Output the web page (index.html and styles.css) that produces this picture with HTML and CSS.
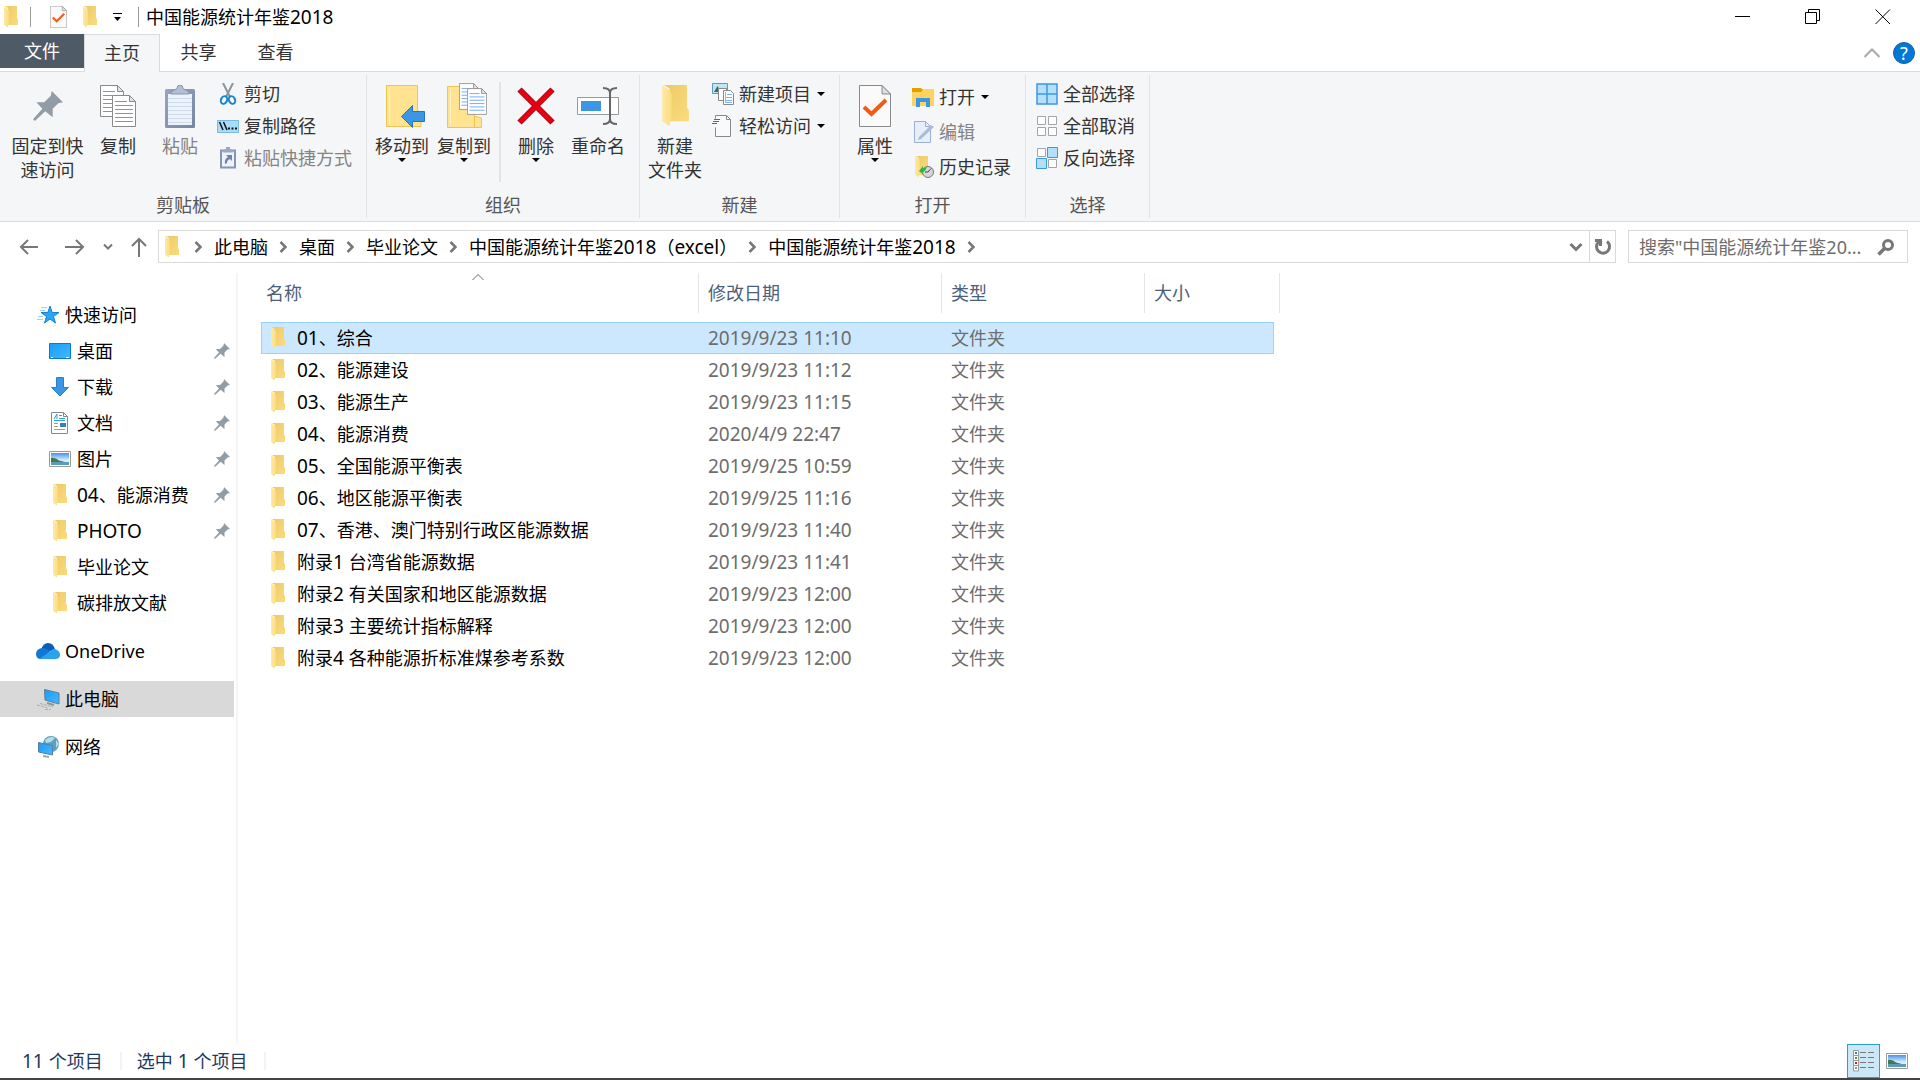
FILE: index.html
```html
<!DOCTYPE html>
<html lang="zh-CN">
<head>
    <meta charset="UTF-8">
    <meta name="viewport" content="width=device-width, initial-scale=1.0">
    <title>中国能源统计年鉴2018</title>
    <link rel="stylesheet" href="styles.css">
</head>
<body>
    <!-- shared icons -->
    <svg class="sprite" aria-hidden="true">
        <defs>
            <linearGradient id="gBack" x1="0" y1="0" x2="1" y2="1">
                <stop offset="0" stop-color="#ecc968"/><stop offset="1" stop-color="#fbdc7d"/>
            </linearGradient>
            <linearGradient id="gFront" x1="0" y1="0" x2="1" y2="0">
                <stop offset="0" stop-color="#ffe9a6"/><stop offset="1" stop-color="#fbdc80"/>
            </linearGradient>
            <linearGradient id="gBlue" x1="0" y1="0" x2="1" y2="1">
                <stop offset="0" stop-color="#1a9bf8"/><stop offset="1" stop-color="#43b8ff"/>
            </linearGradient>
            <linearGradient id="gSky" x1="0" y1="0" x2="0" y2="1">
                <stop offset="0" stop-color="#4a90e8"/><stop offset=".6" stop-color="#d5efff"/>
            </linearGradient>
            <linearGradient id="gClip" x1="0" y1="0" x2="1" y2="1">
                <stop offset="0" stop-color="#96a5c4"/><stop offset="1" stop-color="#75879f"/>
            </linearGradient>
        </defs>
        <symbol id="folder" viewBox="0 0 14 22">
            <path d="M1 0H13V12L14 13V19H4V2Z" fill="url(#gBack)"/>
            <path d="M0 0L4 3Q5 4 5 5V16Q5 18 4 19V21.500L0 19Z" fill="url(#gFront)"/>
        </symbol>
        <symbol id="pin" viewBox="0 0 16 16">
            <path d="M10 0L16 6L13.500 6.500L10.500 9.500L10.500 14L6.500 10.800L1 16L0 15L5 9.500L1.800 6L6 6L9.500 2.500Z" fill="#929ca5"/>
        </symbol>
        <symbol id="page" viewBox="0 0 24 32">
            <path d="M.5 .5H17.500L23.500 6.500V31.500H.5Z" fill="#fff" stroke="#8a8a8a"/>
            <path d="M17.500 .5V6.500H23.500Z" fill="#e4e4e4" stroke="#8a8a8a"/>
            <path d="M3 6.500H15M3 10.500H21M3 14.500H21M3 18.500H21M3 22.500H21M3 26.500H21" stroke="#5b9bf5"/>
        </symbol>
        <symbol id="check" viewBox="0 0 32 42">
            <path d="M.5 .5H23L31.500 9V41.500H.5Z" fill="#fafafa" stroke="#8a8a8a"/>
            <path d="M23 .5V9H31.500Z" fill="#ddd" stroke="#8a8a8a"/>
            <path d="M5 22L12.500 29L27 15" fill="none" stroke="#f25c12" stroke-width="4"/>
        </symbol>
        <symbol id="crumb" viewBox="0 0 8 12">
            <path d="M1.500 1L6.500 6L1.500 11" fill="none" stroke="#777" stroke-width="2.500"/>
        </symbol>
        <symbol id="caret" viewBox="0 0 8 4">
            <path d="M0 0H8L4 4Z" fill="#000"/>
        </symbol>
        <symbol id="picture" viewBox="0 0 22 16">
            <path d="M.5 .5H21.500V15.500H.5Z" fill="#fff" stroke="#999"/>
            <path d="M2 2H20V14H2Z" fill="url(#gSky)"/>
            <path d="M2 7Q6 6 10 9.500L16 11H2Z" fill="#417a52"/>
            <path d="M2 11H20V14H2Z" fill="#5a9db5"/>
        </symbol>
    </svg>

    <header class="title-bar">
        <svg class="folder-icon"><use href="#folder"/></svg>
        <span class="title-sep"></span>
        <button class="quick-btn" aria-label="属性"><svg width="17" height="22"><use href="#check"/></svg></button>
        <button class="quick-btn" aria-label="新建文件夹"><svg class="folder-icon"><use href="#folder"/></svg></button>
        <button class="quick-btn" aria-label="自定义快速访问工具栏">
            <svg width="9" height="9" viewBox="0 0 9 9"><path d="M0 .5H9" stroke="#000"/><path d="M1 4H8L4.500 8Z"/></svg>
        </button>
        <span class="title-sep"></span>
        <h1 class="title">中国能源统计年鉴<span class="en">2018</span></h1>
        <div class="window-controls">
            <button aria-label="最小化"><svg width="16" height="16"><path d="M0 7.500H15" stroke="#000"/></svg></button>
            <button aria-label="还原"><svg width="16" height="16" fill="none" stroke="#000"><path d="M.5 3.500H11.500V14.500H.5ZM3.500 3.500V.5H14.500V11.500H11.500"/></svg></button>
            <button aria-label="关闭"><svg width="16" height="16" stroke="#000"><path d="M.5 .5L15 15M15 .5L.5 15"/></svg></button>
        </div>
    </header>

    <nav class="tabs">
        <button class="tab tab-file">文件</button>
        <button class="tab tab-active">主页</button>
        <button class="tab">共享</button>
        <button class="tab">查看</button>
        <div class="tab-tools">
            <button aria-label="折叠功能区"><svg width="16" height="10" fill="none" stroke="#aaa" stroke-width="2"><path d="M.5 9L8 1.500L15.500 9"/></svg></button>
            <button class="help" aria-label="帮助">?</button>
        </div>
    </nav>

    <section class="ribbon">
        <div class="group group-clipboard">
            <div class="group-body">
                <button class="big-btn big-btn-wide">
                    <span class="big-icon"><svg width="30" height="30"><use href="#pin"/></svg></span>
                    <span>固定到快<br>速访问</span>
                </button>
                <button class="big-btn">
                    <span class="big-icon">
                        <svg width="36" height="42"><use href="#page" width="24" height="32"/><use href="#page" x="12" y="10" width="24" height="32"/></svg>
                    </span>
                    <span>复制</span>
                </button>
                <button class="big-btn" disabled>
                    <span class="big-icon">
                        <svg width="30" height="43" viewBox="0 0 30 43">
                            <rect y="4" width="30" height="39" rx="1.500" fill="url(#gClip)"/>
                            <path d="M3 9H27V40H3Z" fill="#eef3fb"/>
                            <path d="M3 13.500H27M3 17.500H27M3 21.500H27M3 25.500H27M3 29.500H27M3 33.500H27M3 37.500H27" stroke="#cfdaea"/>
                            <path d="M6 9V7L12 3.500Q12 0 15 0Q18 0 18 3.500L24 7V9Z" fill="#b3bfd5" stroke="#8495b5"/>
                        </svg>
                    </span>
                    <span>粘贴</span>
                </button>
                <div class="small-list">
                    <button class="small-btn">
                        <svg width="22" height="22" viewBox="0 0 22 22" fill="none">
                            <path d="M6 0L13 14M16 0L9 14" stroke="#8b959e" stroke-width="2"/>
                            <ellipse cx="7" cy="17" rx="3" ry="4" stroke="#1684cf" stroke-width="2" transform="rotate(25 7 17)"/>
                            <ellipse cx="15" cy="17" rx="3" ry="4" stroke="#1684cf" stroke-width="2" transform="rotate(-25 15 17)"/>
                        </svg>
                        剪切
                    </button>
                    <button class="small-btn">
                        <svg width="22" height="22" viewBox="0 0 22 22">
                            <path d="M.5 5.500H21.500V17.500H.5Z" fill="#a9dbfb" stroke="#7ab8e0"/>
                            <path d="M2.500 7L6 15M6.500 7L10 15" stroke="#111" stroke-width="1.500"/>
                            <path d="M11 13.500h2M14.500 13.500h2M18 13.500h2" stroke="#111" stroke-width="2"/>
                        </svg>
                        复制路径
                    </button>
                    <button class="small-btn" disabled>
                        <svg width="22" height="22" viewBox="0 0 22 22">
                            <path d="M4 3.500H18V20.500H4Z" fill="#eef3fb" stroke="#8495b8" stroke-width="2"/>
                            <path d="M6 5.500V3L9 2V0H13V2L16 3V5.500Z" fill="#9aa8c6"/>
                            <path d="M9 8H15V14L13 12Q10 13 10 16L8 17Q7 12 11 10Z" fill="#7083a8"/>
                        </svg>
                        粘贴快捷方式
                    </button>
                </div>
            </div>
            <div class="group-name">剪贴板</div>
        </div>

        <div class="group group-organize">
            <div class="group-body">
                <button class="big-btn">
                    <span class="big-icon">
                        <svg width="48" height="44" viewBox="-8 0 48 44">
                            <path d="M.5 1.500H31.500V26L35 30V42.500H.5Z" fill="#ffe390" stroke="#ecc654"/>
                            <path d="M3.500 4V40" stroke="#fff2c4"/>
                            <path d="M15.500 32.500L26.500 21.500V27.500H38.500V37.500H26.500V43.500Z" fill="#3b97e6" stroke="#2576be"/>
                        </svg>
                    </span>
                    <span>移动到</span>
                    <svg class="caret"><use href="#caret"/></svg>
                </button>
                <button class="big-btn">
                    <span class="big-icon">
                        <svg width="50" height="46" viewBox="-8 0 50 46">
                            <path d="M.5 3.500H27.500V33L34.500 35V44.500H.5Z" fill="#ffe390" stroke="#ecc654"/>
                            <path d="M27.500 33V44.500" stroke="#ecc654"/>
                            <path d="M3.500 6V42" stroke="#fff2c4"/>
                            <use href="#page" x="12" width="20" height="27"/>
                            <use href="#page" x="20" y="5" width="20" height="27"/>
                        </svg>
                    </span>
                    <span>复制到</span>
                    <svg class="caret"><use href="#caret"/></svg>
                </button>
                <span class="body-sep"></span>
                <button class="big-btn">
                    <span class="big-icon">
                        <svg width="38" height="38" viewBox="0 0 38 38"><path d="M2.500 2.500L35.500 35.500M35.500 2.500L2.500 35.500" stroke="#a3000c" stroke-width="6"/><path d="M3 3L35 35M35 3L3 35" stroke="#e60012" stroke-width="4.500"/></svg>
                    </span>
                    <span>删除</span>
                    <svg class="caret"><use href="#caret"/></svg>
                </button>
                <button class="big-btn">
                    <span class="big-icon">
                        <svg width="42" height="38" viewBox="0 0 42 38">
                            <path d="M.5 10.500H41.500V27.500H.5Z" fill="#fff" stroke="#999"/>
                            <path d="M4 14H24V24H4Z" fill="#3b97e6"/>
                            <path d="M26 1Q33 1 33 6V32Q33 37 26 37M40 1Q33 1 33 6M40 37Q33 37 33 32" fill="none" stroke="#666" stroke-width="2"/>
                        </svg>
                    </span>
                    <span>重命名</span>
                </button>
            </div>
            <div class="group-name">组织</div>
        </div>

        <div class="group group-new">
            <div class="group-body">
                <button class="big-btn">
                    <span class="big-icon"><svg width="27" height="42"><use href="#folder"/></svg></span>
                    <span>新建<br>文件夹</span>
                </button>
                <div class="small-list">
                    <button class="small-btn">
                        <svg width="22" height="22" viewBox="0 0 22 22">
                            <path d="M.5 .5H15.500V10.500H.5Z" fill="#bfe5f7" stroke="#5a9cc0"/>
                            <path d="M2 9L5.500 3L9 9Z" fill="#3d6b55"/>
                            <path d="M6.500 5.500H14.500V17.500H6.500Z" fill="#fff" stroke="#888"/>
                            <path d="M11.500 7.500H18.500L21.500 10.500V21.500H11.500Z" fill="#fff" stroke="#888"/>
                            <path d="M15 11.500H20M13 14.500H20M13 17.500H20M13 19.500H20" stroke="#7fb2f5"/>
                            <path d="M13.500 9V20" stroke="#ef9a9a"/>
                        </svg>
                        新建项目
                        <svg class="caret"><use href="#caret"/></svg>
                    </button>
                    <button class="small-btn">
                        <svg width="22" height="22" viewBox="0 0 22 22">
                            <path d="M3.500 .5H14.500L18.500 4.500V21.500H3.500Z" fill="#fafafa" stroke="#8a8a8a"/>
                            <path d="M14.500 .5V4.500H18.500" fill="none" stroke="#8a8a8a"/>
                            <path d="M2 5H8M1 8H7M0 11H5" stroke="#f5f6f7" stroke-width="3"/>
                            <path d="M2 4.500H8M1 6.500H7M0 8.500H5" stroke="#1979ca" stroke-width="1.200"/>
                        </svg>
                        轻松访问
                        <svg class="caret"><use href="#caret"/></svg>
                    </button>
                </div>
            </div>
            <div class="group-name">新建</div>
        </div>

        <div class="group group-open">
            <div class="group-body">
                <button class="big-btn">
                    <span class="big-icon"><svg width="32" height="42"><use href="#check"/></svg></span>
                    <span>属性</span>
                    <svg class="caret"><use href="#caret"/></svg>
                </button>
                <div class="small-list small-list-loose">
                    <button class="small-btn">
                        <svg width="22" height="22" viewBox="0 0 22 22">
                            <path d="M0 3H22V20H0Z" fill="#ffd35c"/>
                            <path d="M0 2H9L11 4L9 6H0Z" fill="#e0a100"/>
                            <path d="M4 12H18V21H14V16H8V21H4Z" fill="#3b97e6"/>
                        </svg>
                        打开
                        <svg class="caret"><use href="#caret"/></svg>
                    </button>
                    <button class="small-btn" disabled>
                        <svg width="22" height="22" viewBox="0 0 22 22">
                            <path d="M2.500 .5H13.500L18.500 5.500V21.500H2.500Z" fill="#e6eefa" stroke="#9daed0"/>
                            <path d="M13.500 .5V5.500H18.500" fill="none" stroke="#9daed0"/>
                            <path d="M6 19L7 16L19 4L22 6L9 18Z" fill="#a9bbd8"/>
                        </svg>
                        编辑
                    </button>
                    <button class="small-btn">
                        <svg width="22" height="22" viewBox="0 0 22 22">
                            <use href="#folder" x="3" width="14" height="22"/>
                            <circle cx="16" cy="16" r="5.500" fill="#d5d8da" stroke="#777"/>
                            <path d="M16 16L19 12.500M16 16H13" stroke="#444"/>
                            <path d="M7 15L11 10V12Q14 12 15 10Q14 15 11 16V18Z" fill="#2fb344"/>
                        </svg>
                        历史记录
                    </button>
                </div>
            </div>
            <div class="group-name">打开</div>
        </div>

        <div class="group group-select">
            <div class="group-body">
                <div class="small-list">
                    <button class="small-btn">
                        <svg width="22" height="22" viewBox="0 0 22 22"><path d="M1 1H11V11H1ZM11 1H21V11H11ZM1 11H11V21H1ZM11 11H21V21H11Z" fill="#b5e0fb" stroke="#3b97e6" stroke-width="1.500"/></svg>
                        全部选择
                    </button>
                    <button class="small-btn">
                        <svg width="22" height="22" viewBox="0 0 22 22"><path d="M1.500 1.500H9.500V9.500H1.500ZM12.500 1.500H20.500V9.500H12.500ZM1.500 12.500H9.500V20.500H1.500ZM12.500 12.500H20.500V20.500H12.500Z" fill="#fff" stroke="#a5a5a5"/></svg>
                        全部取消
                    </button>
                    <button class="small-btn">
                        <svg width="22" height="22" viewBox="0 0 22 22"><path d="M1.500 1.500H9.500V9.500H1.500ZM12.500 12.500H20.500V20.500H12.500Z" fill="#fff" stroke="#a5a5a5"/><path d="M11.500 .5H21.500V10.500H11.500ZM.5 11.500H10.500V21.500H.5Z" fill="#b5e0fb" stroke="#3b97e6"/></svg>
                        反向选择
                    </button>
                </div>
            </div>
            <div class="group-name">选择</div>
        </div>
    </section>

    <div class="nav-bar">
        <div class="nav-buttons">
            <button aria-label="后退"><svg width="20" height="16" class="arrow"><path d="M19 8H2M9 1L2 8L9 15"/></svg></button>
            <button aria-label="前进"><svg width="20" height="16" class="arrow"><path d="M0 8H18M11 1L18 8L11 15"/></svg></button>
            <button aria-label="最近浏览的位置"><svg width="10" height="8" class="arrow"><path d="M1 1.500L5 5.500L9 1.500"/></svg></button>
            <button aria-label="上移"><svg width="16" height="20" class="arrow"><path d="M8 20V2M1 9L8 2L15 9"/></svg></button>
        </div>
        <div class="address">
            <svg class="folder-icon"><use href="#folder"/></svg>
            <svg class="crumb"><use href="#crumb"/></svg>
            <button>此电脑</button>
            <svg class="crumb"><use href="#crumb"/></svg>
            <button>桌面</button>
            <svg class="crumb"><use href="#crumb"/></svg>
            <button>毕业论文</button>
            <svg class="crumb"><use href="#crumb"/></svg>
            <button>中国能源统计年鉴<span class="en">2018</span>（<span class="en">excel</span>）</button>
            <svg class="crumb"><use href="#crumb"/></svg>
            <button>中国能源统计年鉴<span class="en">2018</span></button>
            <svg class="crumb"><use href="#crumb"/></svg>
            <div class="address-tools">
                <button aria-label="以前的位置"><svg width="14" height="10" fill="none" stroke="#777" stroke-width="3"><path d="M1.500 2L7 7.500L12.500 2"/></svg></button>
                <button class="refresh" aria-label="刷新"><svg width="18" height="18" fill="none" stroke="#777" stroke-width="3"><path d="M4.500 4A6.500 6.500 0 1 0 13 3.500M1 2.500H6.500V8"/></svg></button>
            </div>
        </div>
        <div class="search">
            <input type="text" aria-label="搜索" placeholder="搜索&quot;中国能源统计年鉴20...">
            <button aria-label="开始搜索"><svg width="18" height="18" fill="none" stroke="#777"><circle cx="11" cy="7" r="4.500" stroke-width="3"/><path d="M8 10L1.500 16.500" stroke-width="3.500"/></svg></button>
        </div>
    </div>

    <main class="content">
        <aside class="sidebar">
            <ul class="tree">
                <li><a href="#" class="tree-item tree-root">
                    <svg width="24" height="22" viewBox="0 0 24 22"><path d="M14 2L16.200 8.500H23L17.500 12.500L19.500 19L14 15L8.500 19L10.500 12.500L5 8.500H11.800Z" fill="#2aa5f7" stroke="#1583cf"/><path d="M5 3.500H11M4 6.500H9M2 12.500H7M1 15.500H7" stroke="#9ad4fa"/></svg>
                    快速访问</a></li>
                <li><a href="#" class="tree-item">
                    <svg width="22" height="22" viewBox="0 0 22 22"><path d="M.5 3.500H21.500V18.500H.5Z" fill="url(#gBlue)" stroke="#0d77cd"/><path d="M2 17.500H4M17 17.500H20" stroke="#fff"/></svg>
                    桌面<svg class="pinned"><use href="#pin"/></svg></a></li>
                <li><a href="#" class="tree-item">
                    <svg width="22" height="22" viewBox="0 0 22 22"><path d="M7.500 1.500H14.500V11.500H19.500L11 20L2.500 11.500H7.500Z" fill="#3b97e6" stroke="#2b80ca"/></svg>
                    下载<svg class="pinned"><use href="#pin"/></svg></a></li>
                <li><a href="#" class="tree-item">
                    <svg width="22" height="22" viewBox="0 0 22 22"><path d="M2.500 .5H14.500L18.500 4.500V21.500H2.500Z" fill="#fff" stroke="#888"/><path d="M14.500 .5V4.500H18.500" fill="none" stroke="#888"/><path d="M5 7L8 2V7M10 3.500H13M10 6.500H16M5 8.500H16" stroke="#2e9be6" fill="none"/><path d="M5 11.500H9M5 14.500H9M5 17.500H16" stroke="#999"/><path d="M11 11H17V15H11Z" fill="#3a82ad"/></svg>
                    文档<svg class="pinned"><use href="#pin"/></svg></a></li>
                <li><a href="#" class="tree-item">
                    <svg width="22" height="16"><use href="#picture"/></svg>
                    图片<svg class="pinned"><use href="#pin"/></svg></a></li>
                <li><a href="#" class="tree-item">
                    <svg width="22" height="22"><use href="#folder"/></svg>
                    <span><span class="en">04</span>、能源消费</span><svg class="pinned"><use href="#pin"/></svg></a></li>
                <li><a href="#" class="tree-item">
                    <svg width="22" height="22"><use href="#folder"/></svg>
                    <span class="en">PHOTO</span><svg class="pinned"><use href="#pin"/></svg></a></li>
                <li><a href="#" class="tree-item">
                    <svg width="22" height="22"><use href="#folder"/></svg>
                    毕业论文</a></li>
                <li><a href="#" class="tree-item">
                    <svg width="22" height="22"><use href="#folder"/></svg>
                    碳排放文献</a></li>
            </ul>
            <ul class="tree">
                <li><a href="#" class="tree-item tree-root">
                    <svg width="24" height="16" viewBox="0 0 24 16"><path d="M5 7Q7 0 12 0Q17 0 19 6L12 9Z" fill="#0a5db8"/><path d="M5 16Q0 16 0 11Q0 6 6 5Q11 5 14 9L9 16Z" fill="#1179d4"/><path d="M4 15.500L16 7Q18 5 20 6.500Q24 8 24 11.500Q24 16 19 16H5Z" fill="#2aa3ec"/></svg>
                    OneDrive</a></li>
            </ul>
            <ul class="tree">
                <li><a href="#" class="tree-item tree-root tree-current">
                    <svg width="24" height="22" viewBox="0 0 24 22"><path d="M8.500 1.500L23 5V16L9 12Z" fill="url(#gBlue)" stroke="#5f7f96"/><path d="M11 15L18 17" stroke="#899" stroke-width="2"/><path d="M1 17L12 20M4 15.500L17 19M9 21.500H15" stroke="#a7adb2" stroke-dasharray="3 1"/></svg>
                    此电脑</a></li>
            </ul>
            <ul class="tree">
                <li><a href="#" class="tree-item tree-root">
                    <svg width="24" height="22" viewBox="0 0 24 22"><circle cx="15" cy="8" r="8" fill="#5d9fc0"/><path d="M9 4Q14 -1 19 2L15 6L10 7ZM20 4L23 8L20 12Z" fill="#b9dbe6"/><path d="M2.500 6.500L16.500 9.500V19L2.500 16Z" fill="url(#gBlue)" stroke="#56819c"/><path d="M7 20L13 21" stroke="#9aa" stroke-width="2"/></svg>
                    网络</a></li>
            </ul>
        </aside>

        <div class="file-pane">
            <table class="files">
                <colgroup><col class="col-name"><col class="col-date"><col class="col-type"><col class="col-size"><col class="col-edge"></colgroup>
                <thead>
                    <tr>
                        <th>名称<svg class="sort" width="12" height="7" fill="none" stroke="#666"><path d="M.5 6L6 .5L11.500 6"/></svg></th>
                        <th>修改日期</th>
                        <th>类型</th>
                        <th>大小</th>
                        <th class="edge"></th>
                    </tr>
                </thead>
                <tbody>
                    <tr class="selected"><td><div class="file"><svg class="folder-icon"><use href="#folder"/></svg><span><span class="en">01</span>、综合</span></div></td><td class="en">2019/9/23 11:10</td><td>文件夹</td><td></td></tr>
                    <tr><td><div class="file"><svg class="folder-icon"><use href="#folder"/></svg><span><span class="en">02</span>、能源建设</span></div></td><td class="en">2019/9/23 11:12</td><td>文件夹</td><td></td></tr>
                    <tr><td><div class="file"><svg class="folder-icon"><use href="#folder"/></svg><span><span class="en">03</span>、能源生产</span></div></td><td class="en">2019/9/23 11:15</td><td>文件夹</td><td></td></tr>
                    <tr><td><div class="file"><svg class="folder-icon"><use href="#folder"/></svg><span><span class="en">04</span>、能源消费</span></div></td><td class="en">2020/4/9 22:47</td><td>文件夹</td><td></td></tr>
                    <tr><td><div class="file"><svg class="folder-icon"><use href="#folder"/></svg><span><span class="en">05</span>、全国能源平衡表</span></div></td><td class="en">2019/9/25 10:59</td><td>文件夹</td><td></td></tr>
                    <tr><td><div class="file"><svg class="folder-icon"><use href="#folder"/></svg><span><span class="en">06</span>、地区能源平衡表</span></div></td><td class="en">2019/9/25 11:16</td><td>文件夹</td><td></td></tr>
                    <tr><td><div class="file"><svg class="folder-icon"><use href="#folder"/></svg><span><span class="en">07</span>、香港、澳门特别行政区能源数据</span></div></td><td class="en">2019/9/23 11:40</td><td>文件夹</td><td></td></tr>
                    <tr><td><div class="file"><svg class="folder-icon"><use href="#folder"/></svg><span>附录<span class="en">1 </span>台湾省能源数据</span></div></td><td class="en">2019/9/23 11:41</td><td>文件夹</td><td></td></tr>
                    <tr><td><div class="file"><svg class="folder-icon"><use href="#folder"/></svg><span>附录<span class="en">2 </span>有关国家和地区能源数据</span></div></td><td class="en">2019/9/23 12:00</td><td>文件夹</td><td></td></tr>
                    <tr><td><div class="file"><svg class="folder-icon"><use href="#folder"/></svg><span>附录<span class="en">3 </span>主要统计指标解释</span></div></td><td class="en">2019/9/23 12:00</td><td>文件夹</td><td></td></tr>
                    <tr><td><div class="file"><svg class="folder-icon"><use href="#folder"/></svg><span>附录<span class="en">4 </span>各种能源折标准煤参考系数</span></div></td><td class="en">2019/9/23 12:00</td><td>文件夹</td><td></td></tr>
                </tbody>
            </table>
        </div>
    </main>

    <footer class="status-bar">
        <span class="status-item"><span class="en">11 </span>个项目</span>
        <span class="status-item">选中<span class="en"> 1 </span>个项目</span>
        <div class="view-buttons">
            <button class="view-active" aria-label="详细信息">
                <svg width="22" height="22" viewBox="0 0 22 22"><path d="M.5 .5H5.500V21H.5ZM.5 5.500H5.500M.5 10.500H5.500M.5 15.500H5.500" fill="#fff" stroke="#999"/><path d="M2 3H4" stroke="#2b7bc4" stroke-width="2"/><path d="M2 8H4" stroke="#6a8a2b" stroke-width="2"/><path d="M2 13H4" stroke="#b22" stroke-width="2"/><path d="M2 18H4" stroke="#7a9a8a" stroke-width="2"/><path d="M7 2.500H13M15 2.500H21M7 7.500H13M15 7.500H21M7 12.500H13M15 12.500H21M7 17.500H13M15 17.500H21" stroke="#777"/></svg>
            </button>
            <button aria-label="大缩略图"><svg width="22" height="16"><use href="#picture"/></svg></button>
        </div>
    </footer>
    <div class="taskbar-edge"></div>
</body>
</html>
```
FILE: styles.css
```css
* {
    box-sizing: border-box;
}

body {
    font-family: "Noto Sans", "Noto Sans CJK SC", sans-serif;
    font-size: 18px;
    line-height: 24px;
    margin: 0;
    height: 100vh;
    display: flex;
    flex-direction: column;
    background: #fff;
    color: #000;
    overflow: hidden;
}

button {
    font: inherit;
    color: inherit;
    background: none;
    border: none;
    padding: 0;
    white-space: nowrap;
}

svg {
    flex: none;
    display: block;
}

.sprite {
    position: absolute;
    width: 0;
    height: 0;
}

.en {
    font-size: 19px;
}

.folder-icon {
    width: 14px;
    height: 22px;
}

.caret {
    width: 8px;
    height: 4px;
}

/* title bar */
.title-bar {
    display: flex;
    align-items: center;
    height: 34px;
    padding-left: 4px;
}

.title-sep {
    width: 1px;
    height: 20px;
    margin: 0 7px 0 12px;
    background: #999;
}

.quick-btn {
    margin-left: 12px;
}

.quick-btn + .quick-btn {
    margin-left: 16px;
}

.quick-btn + .title-sep {
    margin-left: 16px;
}

.title {
    margin: 0;
    font-size: 18px;
    font-weight: 400;
}

.window-controls {
    display: flex;
    margin-left: auto;
    padding-right: 2px;
}

.window-controls button {
    width: 70px;
    height: 34px;
    display: flex;
    align-items: center;
    justify-content: center;
}

/* tabs */
.tabs {
    display: flex;
    height: 38px;
    border-bottom: 1px solid #dadbdc;
}

.tab {
    width: 77px;
    height: 36px;
    color: #333;
}

.tab-file {
    width: 84px;
    height: 34px;
    background: #4f5a67;
    color: #fff;
}

.tab-active {
    width: 76px;
    height: 38px;
    padding-bottom: 2px;
    background: #f5f6f7;
    border: 1px solid #dadbdc;
    border-bottom: none;
}

.tab-tools {
    display: flex;
    align-items: center;
    gap: 13px;
    margin-left: auto;
    padding-right: 5px;
}

.help {
    width: 22px;
    height: 22px;
    border-radius: 50%;
    background: #0078d7;
    border: 1px solid #0b5ea8;
    color: #fff;
    line-height: 20px;
}

/* ribbon */
.ribbon {
    display: flex;
    height: 150px;
    padding: 3px 0;
    background: #f5f6f7;
    border-bottom: 1px solid #dadbdc;
    color: #333;
}

.group {
    display: flex;
    flex-direction: column;
    border-right: 1px solid #e2e3e4;
    padding-top: 3px;
}

.group-body {
    display: flex;
    flex: 1;
    align-items: flex-start;
    padding: 0 14px 0 4px;
}

.group-clipboard .group-body {
    padding: 0 14px 0 8px;
}

.group-organize .group-body {
    padding-right: 10px;
}

.group-name {
    height: 25px;
    text-align: center;
    color: #555;
}

.big-btn {
    width: 62px;
    display: flex;
    flex-direction: column;
    align-items: center;
}

.big-btn-wide {
    width: 79px;
}

.big-icon {
    height: 56px;
    display: flex;
    align-items: center;
    justify-content: center;
}

button:disabled {
    color: #848484;
}

.body-sep {
    width: 2px;
    height: 100px;
    margin: 4px 4px 0;
    background: #e2e3e4;
}

.small-list {
    display: flex;
    flex-direction: column;
    padding-left: 6px;
}

.small-btn {
    height: 32px;
    display: flex;
    align-items: center;
    gap: 5px;
}

.small-btn .caret {
    margin-left: 1px;
}

.small-list-loose {
    padding-top: 1px;
}

.small-list-loose .small-btn {
    height: 35px;
}

/* navigation */
.nav-bar {
    display: flex;
    padding: 8px 12px 10px 19px;
}

.nav-buttons {
    display: flex;
    align-items: center;
    width: 139px;
    gap: 18px;
}

.nav-buttons button:first-child {
    margin-right: 8px;
}

.arrow {
    fill: none;
    stroke: #777;
    stroke-width: 2px;
}

.address {
    flex: 1;
    display: flex;
    align-items: center;
    height: 33px;
    border: 1px solid #d9d9d9;
    padding-left: 6px;
}

.crumb {
    width: 8px;
    height: 12px;
    margin: 0 12px 0 11px;
}

.address .folder-icon + .crumb {
    margin-left: 15px;
}

.address-tools {
    display: flex;
    align-self: stretch;
    margin-left: auto;
}

.address-tools button {
    width: 26px;
    display: flex;
    align-items: center;
    justify-content: center;
}

.address-tools .refresh {
    border-left: 1px solid #d9d9d9;
}

.search {
    display: flex;
    align-items: center;
    width: 280px;
    margin-left: 12px;
    padding: 0 12px 0 10px;
    border: 1px solid #d9d9d9;
}

.search input {
    flex: 1;
    min-width: 0;
    border: none;
    outline: none;
    padding: 0;
    font: inherit;
    background: none;
}

.search input::placeholder {
    color: #6d6d6d;
}

/* content */
.content {
    flex: 1;
    display: flex;
    min-height: 0;
}

.sidebar {
    width: 238px;
    padding: 24px 2px 0 0;
    border-right: 2px solid #f5f5f5;
}

.tree {
    list-style: none;
    margin: 0 0 12px;
    padding: 0;
}

.tree-item {
    display: flex;
    align-items: center;
    gap: 6px;
    height: 36px;
    padding: 0 4px 0 49px;
    color: #000;
    text-decoration: none;
}

.tree-root {
    gap: 5px;
    padding-left: 36px;
}

.tree-current {
    background: #d9d9d9;
}

.pinned {
    width: 16px;
    height: 16px;
    margin-left: auto;
}

.file-pane {
    flex: 1;
    padding-left: 23px;
}

.files {
    table-layout: fixed;
    width: 1019px;
    border-spacing: 0;
    color: #6d6d6d;
}

.col-name {
    width: 438px;
}

.col-date {
    width: 243px;
}

.col-type {
    width: 203px;
}

.col-size {
    width: 129px;
}

.col-edge {
    width: 6px;
}

.files th {
    position: relative;
    height: 40px;
    padding: 0 0 0 9px;
    text-align: left;
    font-weight: 400;
    color: #4c607a;
    border-right: 1px solid #e5e5e5;
}

.files th:first-child {
    padding-left: 5px;
}

.files th:nth-child(4) {
    border-right: none;
}

.files .edge {
    padding: 0;
}

.sort {
    position: absolute;
    top: 1px;
    left: 50%;
    margin-left: -8px;
}

.files tbody::before {
    content: "";
    display: block;
    height: 9px;
}

.files td {
    height: 32px;
    padding: 0 0 0 9px;
    border: 1px solid transparent;
    border-width: 1px 0;
}

.files td:first-child {
    border-left-width: 1px;
}

.files td:last-child {
    border-right-width: 1px;
}

.file {
    display: flex;
    align-items: center;
    gap: 12px;
    color: #000;
}

.files .selected td {
    background: #cce8ff;
    border-color: #99d1ff;
}

/* status bar */
.status-bar {
    display: flex;
    align-items: center;
    height: 34px;
    padding: 0 12px 0 22px;
    color: #1e395b;
}

.status-item {
    padding-right: 17px;
    margin-right: 15px;
    border-right: 2px solid #f3f3f3;
    line-height: 18px;
    white-space: pre;
}

.view-buttons {
    display: flex;
    align-items: center;
    gap: 6px;
    margin-left: auto;
}

.view-active {
    width: 33px;
    height: 34px;
    padding: 0 5px;
    background: #cce8f6;
    border: 1px solid #26a0da;
}

.taskbar-edge {
    height: 2px;
    background: #444;
}
```
